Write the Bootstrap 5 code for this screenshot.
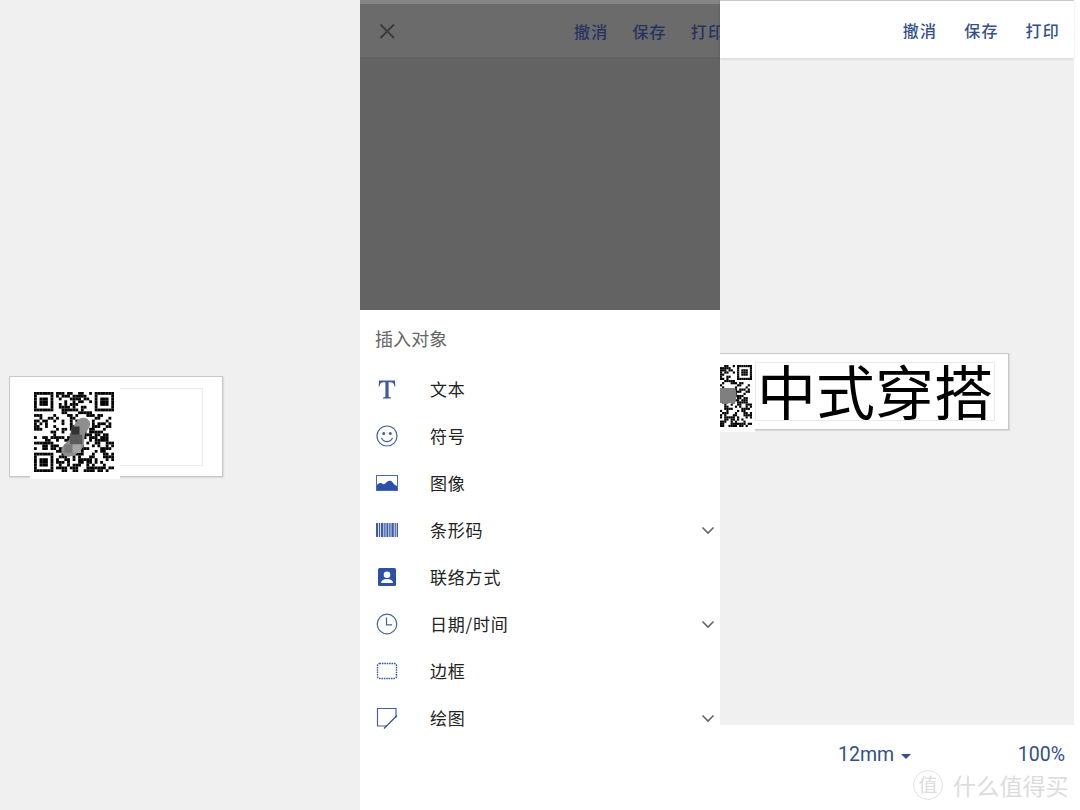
<!DOCTYPE html>
<html lang="zh-CN">
<head>
    <meta charset="UTF-8">
    <meta name="viewport" content="width=device-width, initial-scale=1.0">
    <title>插入对象</title>
    <link href="https://cdn.jsdelivr.net/npm/bootstrap@5.3.3/dist/css/bootstrap.min.css" rel="stylesheet">
    <style>
        html, body { height: 810px; overflow: hidden; }
        body { background: #fff; font-family: "Liberation Sans", "Noto Sans CJK SC", sans-serif; color: #222; }
        .screen { width: 1080px; height: 810px; }
        .pane-left { width: 360px; background: #f0f0f0; }
        .pane-mid { width: 360px; background: #fff; }
        .pane-right { width: 354px; background: #fff; }

        .label-box { position: absolute; background: #fff; border: 1px solid #c8c8c8; box-shadow: 1px 1px 1px #ddd; }
        .label-left { left: 9px; top: 376px; width: 214px; height: 101px; }
        .label-right { left: -30px; top: 295px; width: 319px; height: 77px; }
        .text-frame { position: absolute; border: 1px solid #eaeaea; }
        .label-left .text-frame { left: 108px; top: 11px; width: 85px; height: 78px; }
        .label-right .text-frame { left: 64px; top: 8px; width: 240px; height: 59px; text-align: center; font-size: 59px; line-height: 53px; color: #000; white-space: nowrap; font-family: "Noto Sans CJK SC", sans-serif; }
        .qr-pad { position: absolute; background: #fff; }
        .label-left .qr-pad { left: 20px; top: 9px; width: 90px; height: 93px; padding: 6px 0 0 4px; }
        .label-right .qr-pad { left: 16px; top: 7px; width: 48px; height: 71px; padding: 4px 3px 0 0; overflow: hidden; direction: rtl; }
        .qr-art { display: block; filter: blur(.45px); }

        .top-bar { height: 58px; flex-shrink: 0; overflow: hidden; font-family: "Noto Sans CJK SC", sans-serif; font-size: 16px; font-weight: 500; letter-spacing: 1.2px; }
        .top-bar-dim { background: #6b6b6b; border-top: 4px solid #858585; border-bottom: 1px solid #5f5f5f; color: #27335f; }
        .top-bar-lit { background: #fff; border-top: 1px solid #c9c9c9; box-shadow: 0 1px 3px rgba(0,0,0,.12); color: #35508c; position: relative; z-index: 1; }
        .dim-actions { margin-left: 176px; gap: 24px; flex-shrink: 0; }
        .lit-actions { gap: 27px; padding-right: 14px; }
        .dim-area { height: 252px; background: #636363; }
        .work-area { background: #f0f0f0; }
        .sheet-title { height: 55px; padding: 12px 15px 0; font-size: 18px; line-height: 32px; color: #666; letter-spacing: .1px; font-family: "Noto Sans CJK SC", sans-serif; }
        .insert-row { height: 47px; padding: 0 5px 0 15px; border: 0; font-size: 17px; letter-spacing: .8px; color: #222; font-family: "Noto Sans CJK SC", sans-serif; }
        .insert-ico { width: 55px; flex-shrink: 0; }
        .insert-ico svg { display: block; }

        .bottom-bar { height: 85px; padding: 13px 9px 0 118px; font-family: Roboto, sans-serif; font-size: 19.5px; line-height: 34px; color: #34508c; }
        .size-caret { width: 0; height: 0; border-left: 5.5px solid transparent; border-right: 5.5px solid transparent; border-top: 5.5px solid #34508c; margin-left: 7px; }
        .site-mark { position: absolute; left: 913px; top: 770px; color: #dcdcdc; font-family: "Noto Sans CJK SC", sans-serif; }
        .site-seal { width: 30px; height: 30px; border: 1.5px solid #e2e2e2; border-radius: 50%; font-size: 19px; line-height: 26px; text-align: center; }
        .site-name { font-size: 23px; line-height: 30px; margin-left: 10px; letter-spacing: .2px; }
    </style>
</head>
<body>
    <div class="screen d-flex position-relative">
        <div class="pane-left position-relative">
            <div class="label-box label-left">
                <div class="text-frame"></div>
                <div class="qr-pad"><svg class="qr-art" data-blob="left" width="80" height="80" viewBox="0 0 29 29"></svg></div>
            </div>
        </div>

        <div class="pane-mid d-flex flex-column">
            <div class="top-bar top-bar-dim d-flex align-items-center">
                <svg class="ms-3 flex-shrink-0" width="22" height="22" viewBox="0 0 22 22" fill="none" stroke="#3a3a3a" stroke-width="1.8"><path d="M4.5 4.5 18 18M18 4.5 4.5 18"/></svg>
                <div class="dim-actions d-flex">
                    <span>撤消</span><span>保存</span><span>打印</span>
                </div>
            </div>
            <div class="dim-area"></div>
            <div class="sheet-title">插入对象</div>
            <div class="list-group list-group-flush">
                <div class="list-group-item insert-row d-flex align-items-center">
                    <span class="insert-ico"><svg width="24" height="24" viewBox="0 0 24 24" fill="#3f5a9e"><path d="M4 3.500h16l.3 6h-.8c-.6-3-1.500-4.300-4.700-4.300h-1.200v13.800c0 1 .6 1.400 2.400 1.500v.9H8v-.9c1.800-.1 2.400-.5 2.400-1.500V5.200H9.200C6 5.200 5.100 6.500 4.500 9.500h-.8z"/></svg></span>
                    <span>文本</span>
                </div>
                <div class="list-group-item insert-row d-flex align-items-center">
                    <span class="insert-ico"><svg width="24" height="24" viewBox="0 0 24 24" fill="none" stroke="#4a6199" stroke-width="1.200"><circle cx="12" cy="12" r="10"/><circle cx="8.700" cy="9.500" r=".9" fill="#4a6199"/><circle cx="15.300" cy="9.500" r=".9" fill="#4a6199"/><path d="M6.500 14c1.200 2.400 3.200 3.600 5.500 3.600s4.300-1.200 5.500-3.600"/></svg></span>
                    <span>符号</span>
                </div>
                <div class="list-group-item insert-row d-flex align-items-center">
                    <span class="insert-ico"><svg width="24" height="24" viewBox="0 0 24 24"><rect x="1.500" y="4.500" width="21" height="15" fill="#fff" stroke="#4a6bb0" stroke-width="1"/><path d="M2 19v-5c2-2 3.500-2.500 5-1.500 1.200.8 2 1 3 .3 2-2.300 3.800-3.500 5.500-3 1.800.5 2.500 2.500 3.500 3.500.8.800 2 1.200 3 1.700V19z" fill="#2c4fa8"/></svg></span>
                    <span>图像</span>
                </div>
                <div class="list-group-item insert-row d-flex align-items-center">
                    <span class="insert-ico"><svg width="24" height="24" viewBox="0 0 24 24" fill="#3f5aa6"><rect x="1" y="5" width="2" height="14"/><rect x="3.800" y="5" width="1.400" height="14"/><rect x="6" y="5" width="2.400" height="14"/><rect x="9.200" y="5" width="1.400" height="14"/><rect x="11.400" y="5" width="2" height="14"/><rect x="14.200" y="5" width="1.400" height="14"/><rect x="16.400" y="5" width="2.400" height="14"/><rect x="19.600" y="5" width="1.200" height="14"/><rect x="21.600" y="5" width="1.400" height="14"/></svg></span>
                    <span>条形码</span>
                    <svg class="ms-auto" width="14" height="14" viewBox="0 0 14 14" fill="none" stroke="#666" stroke-width="1.600"><path d="M1.500 4.500 7 10l5.500-5.500"/></svg>
                </div>
                <div class="list-group-item insert-row d-flex align-items-center">
                    <span class="insert-ico"><svg width="24" height="24" viewBox="0 0 24 24"><rect x="3" y="3" width="18" height="18" rx="1.500" fill="#2c4fa8"/><circle cx="12" cy="9.800" r="3.300" fill="#fff"/><path d="M6 18c.3-3 2.500-4 6-4s5.700 1 6 4z" fill="#fff"/></svg></span>
                    <span>联络方式</span>
                </div>
                <div class="list-group-item insert-row d-flex align-items-center">
                    <span class="insert-ico"><svg width="24" height="24" viewBox="0 0 24 24" fill="none" stroke="#4a6199" stroke-width="1.200"><circle cx="12" cy="12" r="9.800"/><path d="M11.500 5.500v7.300h5.500"/></svg></span>
                    <span>日期/时间</span>
                    <svg class="ms-auto" width="14" height="14" viewBox="0 0 14 14" fill="none" stroke="#666" stroke-width="1.600"><path d="M1.500 4.500 7 10l5.500-5.500"/></svg>
                </div>
                <div class="list-group-item insert-row d-flex align-items-center">
                    <span class="insert-ico"><svg width="24" height="24" viewBox="0 0 24 24" fill="none" stroke="#3f5a9e" stroke-width="1.400" stroke-dasharray="1.600 .8"><rect x="2.500" y="4.500" width="19" height="15" rx="2"/></svg></span>
                    <span>边框</span>
                </div>
                <div class="list-group-item insert-row d-flex align-items-center">
                    <span class="insert-ico"><svg width="24" height="24" viewBox="0 0 24 24" fill="none" stroke="#4a6199" stroke-width="1.200"><path d="M21 11.500V2.500H2.500V20H12"/><path d="M9 22.500 22 9.500" stroke="#35508c"/></svg></span>
                    <span>绘图</span>
                    <svg class="ms-auto" width="14" height="14" viewBox="0 0 14 14" fill="none" stroke="#666" stroke-width="1.600"><path d="M1.500 4.500 7 10l5.500-5.500"/></svg>
                </div>
            </div>
        </div>

        <div class="pane-right d-flex flex-column">
            <div class="top-bar top-bar-lit d-flex align-items-center justify-content-end">
                <div class="lit-actions d-flex">
                    <span>撤消</span><span>保存</span><span>打印</span>
                </div>
            </div>
            <div class="work-area flex-grow-1 position-relative overflow-hidden">
                <div class="label-box label-right">
                    <div class="text-frame">中式穿搭</div>
                    <div class="qr-pad"><svg class="qr-art" data-blob="right" width="62" height="62" viewBox="0 0 29 29"></svg></div>
                </div>
            </div>
            <div class="bottom-bar d-flex align-items-start flex-shrink-0">
                <span>12mm</span>
                <span class="size-caret mt-3"></span>
                <span class="ms-auto">100%</span>
            </div>
        </div>

        <div class="site-mark d-flex">
            <div class="site-seal">值</div>
            <div class="site-name">什么值得买</div>
        </div>
    </div>

    <script>
        const SIZE = 29;
        function finderCell(x, y) {
            const inBox = (ox, oy) => {
                const dx = x - ox, dy = y - oy;
                if (dx < 0 || dy < 0 || dx > 6 || dy > 6) return null;
                if (dx === 0 || dy === 0 || dx === 6 || dy === 6) return 1;
                if (dx >= 2 && dx <= 4 && dy >= 2 && dy <= 4) return 1;
                return 0;
            };
            const boxes = [[0, 0], [22, 0], [0, 22]];
            for (const [ox, oy] of boxes) {
                const hit = inBox(ox, oy);
                if (hit !== null) return hit;
            }
            if ((x === 7 && (y < 8 || y > 20)) || (y === 7 && (x < 8 || x > 20))) return 0;
            if (x === 21 && y < 8) return 0;
            if (y === 21 && x < 8) return 0;
            return null;
        }

        // fixed pseudo random modules, looks like a qr code at this size
        let seed = 7341;
        function nextBit() {
            seed = (seed * 1103515245 + 12345) & 0x7fffffff;
            return (seed >> 16) & 1;
        }
        const cells = [];
        for (let y = 0; y < SIZE; y++) {
            for (let x = 0; x < SIZE; x++) {
                const fixed = finderCell(x, y);
                const bit = fixed === null ? nextBit() : fixed;
                if (bit) cells.push(`<rect x="${x}" y="${y}" width="1.02" height="1.02"/>`);
            }
        }

        const blobs = {
            left: '<path d="M15.500 10.500c1.500-1.800 4-1.500 4.700.3.600 1.700-.8 3-1.700 4.200l-.5 4.500c-.8 1.800-2.500 3.300-4.500 3.800-1.800.5-3.500-.5-3.500-2-.1-1.500 1.500-2.800 2.800-4l.6-3.500z" fill="#8e8e8e"/>'
                + '<rect x="13" y="15.500" width="4.500" height="3.500" fill="#5c5c5c"/>'
                + '<rect x="13.500" y="12.500" width="3" height="3" fill="#333"/>'
                + '<rect x="11" y="19" width="3" height="3" fill="#7a7a7a"/>'
                + '<rect x="14" y="19" width="3" height="3" fill="#a5a5a5"/>',
            right: '<path d="M13 10.800h8c1 2 1 5 0 7h-8z" fill="#7f7f7f"/>'
        };
        document.querySelectorAll('.qr-art').forEach(svg => {
            svg.innerHTML = cells.join('') + blobs[svg.dataset.blob];
        });
    </script>
    <script src="https://cdn.jsdelivr.net/npm/bootstrap@5.3.3/dist/js/bootstrap.bundle.min.js"></script>
</body>
</html>
